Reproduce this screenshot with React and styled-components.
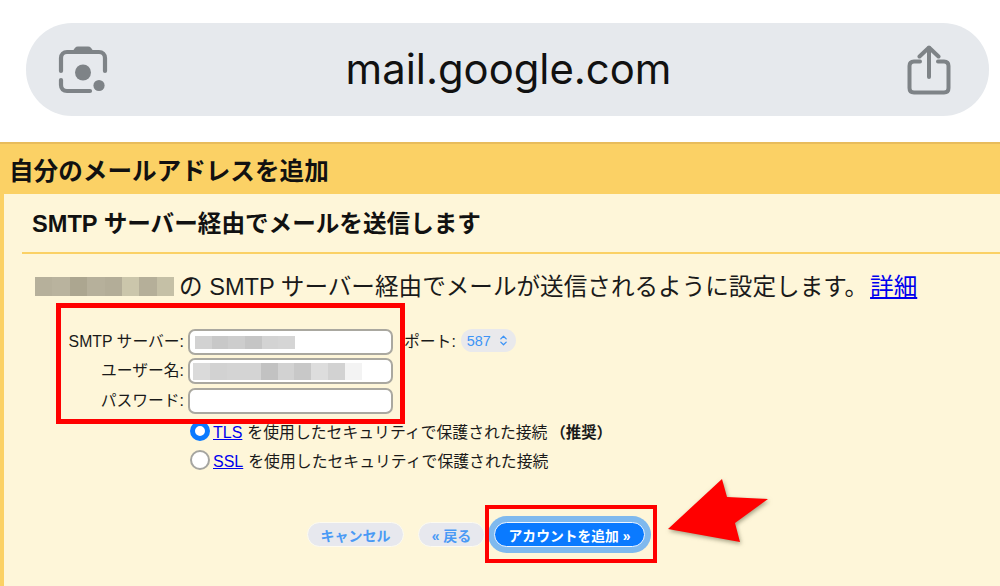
import styled, { createGlobalStyle } from "styled-components";
import { ChevronsUpDown } from "lucide-react";

const GlobalStyle = createGlobalStyle`
  html, body {
    margin: 0;
    padding: 0;
    background: #fff;
  }
  * {
    box-sizing: border-box;
  }
`;

const FONT = `"Liberation Sans", "Noto Sans CJK JP", sans-serif`;

const emailBlur = ["#b6b09b", "#b9b39e", "#aca690", "#b6b09b", "#b3ad98", "#cbc6ab", "#b5af99", "#c5c0a6"];
const serverBlur = ["#d2d2d2", "#c8c8c8", "#cdcdcd", "#c5c5c5", "#d3d3d3", "#d5d5d5"];
const userBlur = ["#dadada", "#d2d2d2", "#d4d4d4", "#d4d4d4", "#c2c2c2", "#d2d2d2", "#c8c8c8", "#dddddd", "#d2d2d2", "#f3f3f3"];

const LensIcon = () => (
  <svg width="50" height="50" viewBox="0 0 50 50" fill="none">
    <path d="M14.5 7 C16 3.5 17.5 1.5 20 1.5 H30 C32.5 1.5 34 3.5 35.5 7 Z" fill="#7e8387" />
    <path
      d="M3 26 V13 C3 9.5 5.5 7 9 7 H41 C44.5 7 47 9.5 47 13 V26"
      stroke="#7e8387"
      strokeWidth="4.2"
      strokeLinecap="round"
    />
    <path
      d="M3 35 V40 C3 44 5.5 46 9 46 H32"
      stroke="#7e8387"
      strokeWidth="4.2"
      strokeLinecap="round"
    />
    <circle cx="25" cy="27.5" r="8" fill="#7e8387" />
    <circle cx="41" cy="40.5" r="5.6" fill="#7e8387" />
  </svg>
);

const ShareIcon = () => (
  <svg width="44" height="50" viewBox="0 0 44 50" fill="none" stroke="#7e8387" strokeWidth="4" strokeLinecap="round" strokeLinejoin="round">
    <path d="M13 16.5 H7 C4 16.5 2.5 18 2.5 21 V43 C2.5 46 4 47.5 7 47.5 H37 C40 47.5 41.5 46 41.5 43 V21 C41.5 18 40 16.5 37 16.5 H31" />
    <path d="M22 32 V3" />
    <path d="M12.5 11.5 L22 2.5 L31.5 11.5" />
  </svg>
);

export default function App() {
  return (
    <Page>
      <GlobalStyle />
      <TopArea>
        <AddressBar>
          <LensIcon />
          <Url>mail.google.com</Url>
          <ShareIcon />
        </AddressBar>
      </TopArea>

      <Panel>
        <PanelHeader>自分のメールアドレスを追加</PanelHeader>
        <PanelBody>
          <SubTitle>SMTP サーバー経由でメールを送信します</SubTitle>
          <Intro>
            <BlurStrip $width={139} $height={19}>
              {emailBlur.map((c, i) => (
                <BlurCell key={i} $color={c} />
              ))}
            </BlurStrip>
            <IntroText>の SMTP サーバー経由でメールが送信されるように設定します。</IntroText>
            <IntroLink href="#">詳細</IntroLink>
          </Intro>

          <FormRow $top={31}>
            <FieldLabel>SMTP サーバー:</FieldLabel>
            <TextField>
              <BlurStrip $width={100} $height={13} $inset={5}>
                {serverBlur.map((c, i) => (
                  <BlurCell key={i} $color={c} />
                ))}
              </BlurStrip>
            </TextField>
            <PortLabel>ポート:</PortLabel>
            <PortSelect>
              587
              <ChevronsUpDown size={13} strokeWidth={2.4} />
            </PortSelect>
          </FormRow>
          <FormRow $top={3}>
            <FieldLabel>ユーザー名:</FieldLabel>
            <TextField>
              <BlurStrip $width={169} $height={17} $inset={3}>
                {userBlur.map((c, i) => (
                  <BlurCell key={i} $color={c} />
                ))}
              </BlurStrip>
            </TextField>
          </FormRow>
          <FormRow $top={4}>
            <FieldLabel>パスワード:</FieldLabel>
            <TextField />
          </FormRow>

          <RadioRow $top={6}>
            <RadioDot $checked />
            <RadioLink href="#">TLS</RadioLink>
            <span>を使用したセキュリティで保護された接続</span>
            <strong>（推奨）</strong>
          </RadioRow>
          <RadioRow $top={7}>
            <RadioDot />
            <RadioLink href="#">SSL</RadioLink>
            <span>を使用したセキュリティで保護された接続</span>
          </RadioRow>

          <ButtonRow>
            <GhostButton $width={97}>キャンセル</GhostButton>
            <GhostButton $width={67}>« 戻る</GhostButton>
            <PrimaryButton>アカウントを追加 »</PrimaryButton>
          </ButtonRow>
        </PanelBody>
      </Panel>

      <RedFrame $left={56} $top={303} $width={349} $height={121} $border={5} />
      <RedFrame $left={485} $top={505} $width={172} $height={58} $border={4} />
      <Arrow viewBox="0 0 110 70" width="110" height="70">
        <polygon points="54,4 59,22 100,24 67,48 72,67 0,54" fill="#ff0000" />
      </Arrow>
    </Page>
  );
}

const Page = styled.div`
  position: relative;
  width: 1000px;
  height: 586px;
  overflow: hidden;
  background: #fff;
  font-family: ${FONT};
  color: #1a1a1a;
`;

const TopArea = styled.div`
  height: 142px;
  padding: 23px 11px 26px 26px;
`;

const AddressBar = styled.div`
  height: 93px;
  border-radius: 46px;
  background: #e6e9ed;
  display: flex;
  align-items: center;
  justify-content: space-between;
  padding: 0 38px 0 32px;
`;

const Url = styled.div`
  font-family: Inter, "Liberation Sans", sans-serif;
  font-size: 41.8px;
  line-height: 48px;
  margin: -2px 0 0 2px;
  color: #111;
`;

const Panel = styled.div`
  height: 444px;
  border-top: 2px solid #e8bc5c;
  background: #fbd165;
  padding-left: 4px;
  display: flex;
  flex-direction: column;
`;

const PanelHeader = styled.div`
  height: 50px;
  padding-left: 5px;
  display: flex;
  align-items: center;
  font-size: 24.6px;
  font-weight: 700;
  color: #111;
`;

const PanelBody = styled.div`
  flex: 1;
  background: #fef6d9;
  padding-left: 18px;
`;

const SubTitle = styled.div`
  height: 60px;
  padding: 0 0 3px 10px;
  display: flex;
  align-items: center;
  border-bottom: 2px solid #fbd165;
  font-size: 23.6px;
  font-weight: 700;
  color: #111;
`;

const Intro = styled.div`
  display: flex;
  align-items: center;
  height: 24px;
  margin: 20px 0 0 13px;
  gap: 5px;
  font-size: 23.6px;
  white-space: nowrap;
`;

const IntroText = styled.span`
  margin-bottom: 3px;
`;

const IntroLink = styled.a`
  color: #0000ee;
  text-decoration: underline;
  margin: 0 0 3px -3px;
`;

const BlurStrip = styled.div`
  display: flex;
  flex: none;
  width: ${(p) => p.$width}px;
  height: ${(p) => p.$height}px;
  margin-left: ${(p) => p.$inset || 0}px;
`;

const BlurCell = styled.div`
  flex: 1;
  background: ${(p) => p.$color};
`;

const FormRow = styled.div`
  display: flex;
  align-items: center;
  height: 26px;
  margin-top: ${(p) => p.$top}px;
`;

const FieldLabel = styled.div`
  width: 162px;
  padding-bottom: 3px;
  text-align: right;
  font-size: 15.8px;
  white-space: nowrap;
`;

const TextField = styled.div`
  width: 205px;
  height: 26px;
  margin-left: 4px;
  display: flex;
  align-items: center;
  background: #fff;
  border: 2px solid #aaa8a0;
  border-radius: 7px;
`;

const PortLabel = styled.div`
  margin-left: 11px;
  padding-bottom: 4px;
  font-size: 15.8px;
  white-space: nowrap;
`;

const PortSelect = styled.div`
  margin: 0 0 3px 5px;
  width: 55px;
  height: 23px;
  border-radius: 12px;
  background: #e9e9ec;
  display: flex;
  align-items: center;
  justify-content: center;
  gap: 6px;
  color: #3d94f6;
  font-size: 14.4px;
`;

const RadioRow = styled.div`
  display: flex;
  align-items: baseline;
  gap: 3px;
  height: 22px;
  line-height: 25px;
  margin: ${(p) => p.$top}px 0 0 168px;
  font-size: 15.85px;
  white-space: nowrap;

  strong {
    font-weight: 700;
    font-size: 15.4px;
  }
`;

const RadioDot = styled.div`
  flex: none;
  align-self: center;
  width: 20px;
  height: 20px;
  border-radius: 50%;
  background: #fff;
  border: ${(p) => (p.$checked ? "5px solid #0a7aff" : "2px solid #a5a5a0")};
`;

const RadioLink = styled.a`
  color: #0000ee;
  text-decoration: underline;
  font-size: 16px;
  margin-right: 2px;
`;

const ButtonRow = styled.div`
  display: flex;
  align-items: center;
  margin: 51px 0 0 285px;
`;

const GhostButton = styled.div`
  width: ${(p) => p.$width}px;
  height: 25px;
  margin-right: 14px;
  border-radius: 13px;
  background: #e7e8ee;
  border: 1px solid #fdfbf0;
  display: flex;
  align-items: center;
  justify-content: center;
  color: #4a9af5;
  font-size: 14px;
  font-weight: 700;
  white-space: nowrap;
`;

const PrimaryButton = styled.div`
  width: 151px;
  height: 25px;
  margin-left: -5px;
  border-radius: 13px;
  background: #0a7aff;
  border: 1px solid #f0f6ff;
  box-shadow: 0 0 0 6px #7fb9ee;
  display: flex;
  align-items: center;
  justify-content: center;
  color: #fff;
  font-size: 13.8px;
  font-weight: 700;
  white-space: nowrap;
`;

const RedFrame = styled.div`
  position: absolute;
  left: ${(p) => p.$left}px;
  top: ${(p) => p.$top}px;
  width: ${(p) => p.$width}px;
  height: ${(p) => p.$height}px;
  border: ${(p) => p.$border}px solid #ff0000;
`;

const Arrow = styled.svg`
  position: absolute;
  left: 668px;
  top: 475px;
  filter: drop-shadow(1px 2px 2px rgba(90, 90, 60, 0.55));
`;
